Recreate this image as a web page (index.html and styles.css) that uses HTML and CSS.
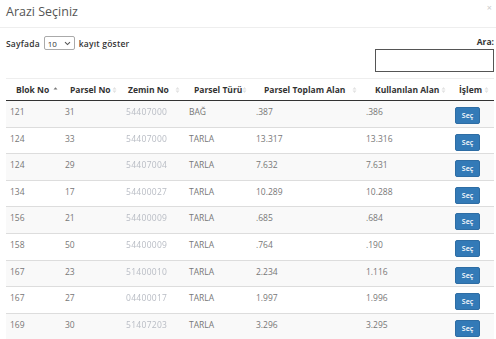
FILE: index.html
```html
<!DOCTYPE html>
<html lang="tr">
<head>
  <meta charset="UTF-8">
  <title>Arazi Seçiniz</title>
  <link rel="stylesheet" href="styles.css">
</head>
<body>

  <div class="modal">
    <div class="modal-header">
      <h4>Arazi Seçiniz</h4>
      <span class="close">&times;</span>
    </div>

    <div class="modal-body">
      <div class="controls">
        <div class="length">
          <span>Sayfada</span>
          <span class="select-wrap">
            <select>
              <option>10</option>
              <option>25</option>
              <option>50</option>
            </select>
            <svg class="chevron" width="7" height="5" viewBox="0 0 7 5"><path d="M1 1.2 L3.5 3.6 L6 1.2" fill="none" stroke="#555" stroke-width="1.1"/></svg>
          </span>
          <span>kayıt göster</span>
        </div>
        <div class="filter">
          <label>Ara:</label>
          <input type="search" />
        </div>
      </div>

      <table class="grid">
        <colgroup>
          <col style="width:55px">
          <col style="width:61px">
          <col style="width:63px">
          <col style="width:67px">
          <col style="width:110px">
          <col style="width:89px">
          <col style="width:43px">
        </colgroup>
        <thead>
          <tr>
            <th><div class="th-in"><span>Blok No</span><svg class="sort asc" width="5" height="8" viewBox="0 0 5 8"><path d="M0.5 3.6 L2.5 1.2 L4.5 3.6 Z" fill="#777"/></svg></div></th>
            <th><div class="th-in"><span>Parsel No</span><svg class="sort" width="5" height="8" viewBox="0 0 5 8"><path d="M0.5 3.4 L2.5 1 L4.5 3.4 Z M0.5 4.6 L2.5 7 L4.5 4.6 Z" fill="#e2e2e2"/></svg></div></th>
            <th><div class="th-in"><span>Zemin No</span><svg class="sort" width="5" height="8" viewBox="0 0 5 8"><path d="M0.5 3.4 L2.5 1 L4.5 3.4 Z M0.5 4.6 L2.5 7 L4.5 4.6 Z" fill="#e2e2e2"/></svg></div></th>
            <th><div class="th-in"><span>Parsel Türü</span><svg class="sort" width="5" height="8" viewBox="0 0 5 8"><path d="M0.5 3.4 L2.5 1 L4.5 3.4 Z M0.5 4.6 L2.5 7 L4.5 4.6 Z" fill="#e2e2e2"/></svg></div></th>
            <th><div class="th-in"><span>Parsel Toplam Alan</span><svg class="sort" width="5" height="8" viewBox="0 0 5 8"><path d="M0.5 3.4 L2.5 1 L4.5 3.4 Z M0.5 4.6 L2.5 7 L4.5 4.6 Z" fill="#e2e2e2"/></svg></div></th>
            <th><div class="th-in"><span>Kullanılan Alan</span><svg class="sort" width="5" height="8" viewBox="0 0 5 8"><path d="M0.5 3.4 L2.5 1 L4.5 3.4 Z M0.5 4.6 L2.5 7 L4.5 4.6 Z" fill="#e2e2e2"/></svg></div></th>
            <th><div class="th-in"><span>İşlem</span><svg class="sort" width="5" height="8" viewBox="0 0 5 8"><path d="M0.5 3.4 L2.5 1 L4.5 3.4 Z M0.5 4.6 L2.5 7 L4.5 4.6 Z" fill="#e2e2e2"/></svg></div></th>
          </tr>
        </thead>
        <tbody>
          <tr><td>121</td><td>31</td><td class="masked">54407000</td><td>BAĞ</td><td>.387</td><td>.386</td><td><button>Seç</button></td></tr>
          <tr><td>124</td><td>33</td><td class="masked">54407000</td><td>TARLA</td><td>13.317</td><td>13.316</td><td><button>Seç</button></td></tr>
          <tr><td>124</td><td>29</td><td class="masked">54407004</td><td>TARLA</td><td>7.632</td><td>7.631</td><td><button>Seç</button></td></tr>
          <tr><td>134</td><td>17</td><td class="masked">54400027</td><td>TARLA</td><td>10.289</td><td>10.288</td><td><button>Seç</button></td></tr>
          <tr><td>156</td><td>21</td><td class="masked">54400009</td><td>TARLA</td><td>.685</td><td>.684</td><td><button>Seç</button></td></tr>
          <tr><td>158</td><td>50</td><td class="masked">54400009</td><td>TARLA</td><td>.764</td><td>.190</td><td><button>Seç</button></td></tr>
          <tr><td>167</td><td>23</td><td class="masked">51400010</td><td>TARLA</td><td>2.234</td><td>1.116</td><td><button>Seç</button></td></tr>
          <tr><td>167</td><td>27</td><td class="masked">04400017</td><td>TARLA</td><td>1.997</td><td>1.996</td><td><button>Seç</button></td></tr>
          <tr><td>169</td><td>30</td><td class="masked">51407203</td><td>TARLA</td><td>3.296</td><td>3.295</td><td><button>Seç</button></td></tr>
        </tbody>
      </table>
    </div>
  </div>

</body>
</html>
```

FILE: styles.css
```css
body {
  margin: 0;
  font-family: 'Open Sans', sans-serif;
  background: #fff;
  color: #333;
  overflow: hidden;
}

.modal-header {
  height: 27px;
  border-bottom: 1px solid #eee;
  display: flex;
  justify-content: space-between;
  align-items: flex-start;
  padding: 0 4px 0 6px;
}

.modal-header h4 {
  margin: 3px 0 0;
  font-size: 12.5px;
  font-weight: 400;
  color: #555;
}

.close {
  color: #ccc;
  font-size: 9px;
  line-height: 1;
  margin-top: 3px;
}

.modal-body {
  padding: 0 2px 0 6px;
}

.controls {
  display: flex;
  justify-content: space-between;
  align-items: flex-start;
  height: 50px;
}

.length {
  display: flex;
  align-items: center;
  gap: 3px;
  margin-top: 8px;
  font-size: 8.5px;
  font-weight: 600;
  color: #333;
  letter-spacing: 0.2px;
}

.select-wrap {
  position: relative;
  display: inline-block;
  margin: 0 1px;
}

.select-wrap select {
  -webkit-appearance: none;
  appearance: none;
  width: 31px;
  height: 14px;
  padding: 0 0 0 3px;
  border: 1px solid #aaa;
  border-radius: 2px;
  background: #fff;
  font-family: 'Open Sans', sans-serif;
  font-size: 8px;
  color: #333;
  display: block;
}

.chevron {
  position: absolute;
  right: 4px;
  top: 5px;
}

.filter {
  display: flex;
  flex-direction: column;
  align-items: flex-end;
  margin-top: 8px;
}

.filter label {
  font-size: 8.5px;
  font-weight: 700;
  color: #333;
  margin-bottom: 2px;
}

.filter input {
  width: 119px;
  height: 23px;
  box-sizing: border-box;
  border: 1px solid #555;
  border-radius: 0;
  padding: 0 4px;
}

.grid {
  width: 488px;
  border-collapse: collapse;
  table-layout: fixed;
  font-size: 8.5px;
}

.grid th {
  height: 21px;
  padding: 0 5px 0 9px;
  border-top: 1px solid #eee;
  border-bottom: 1px solid #333;
  text-align: left;
  font-weight: 700;
  color: #333;
  white-space: nowrap;
}

.th-in {
  display: flex;
  justify-content: space-between;
  align-items: center;
}

.th-in .sort {
  flex-shrink: 0;
}

.grid th:nth-child(1) { padding-left: 10px; padding-right: 0; }
.grid th:nth-child(3) { padding-left: 6px; }
.grid th:nth-child(5) { padding-left: 12px; }
.grid th:nth-child(6) { padding-left: 13px; }
.grid th:nth-child(7) { padding-left: 8px; }

.grid th:nth-child(1) .th-in { justify-content: flex-start; gap: 4px; }

.grid td {
  height: 26.6px;
  box-sizing: border-box;
  padding: 5px 4px 0;
  vertical-align: top;
  border-top: 1px solid #ddd;
  color: #777;
  white-space: nowrap;
}

.grid tbody tr:nth-child(odd) {
  background: #f9f9f9;
}

.grid td.masked {
  color: #b8bcc4;
  filter: blur(0.4px);
  letter-spacing: 0.3px;
}

.grid button {
  width: 25px;
  height: 17px;
  padding: 0;
  margin-top: 1px;
  background: #337ab7;
  border: 1px solid #2e6da4;
  border-radius: 2px;
  color: #fff;
  font-family: 'Open Sans', sans-serif;
  font-size: 7px;
  font-weight: 600;
}
```
